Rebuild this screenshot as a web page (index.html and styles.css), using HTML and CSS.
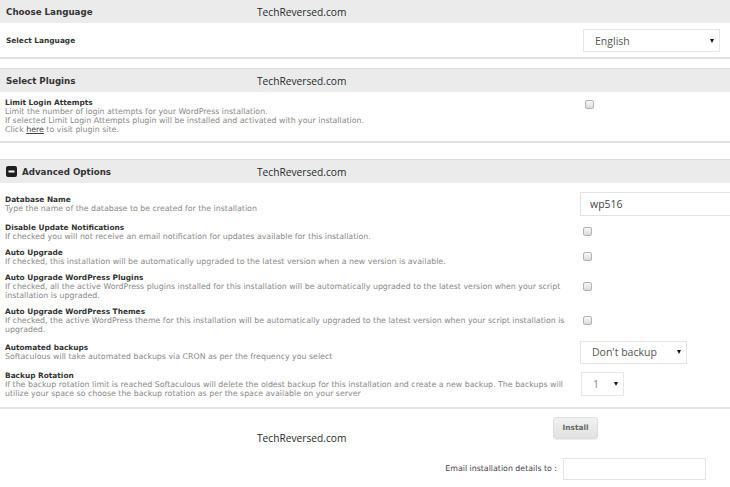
FILE: index.html
```html
<!DOCTYPE html>
<html>
<head>
<meta charset="utf-8">
<link rel="stylesheet" href="styles.css">
</head>
<body>
<div class="page">

  <section class="sec sec-lang">
    <div class="sec-head"><span class="sec-title">Choose Language</span><span class="wm">TechReversed.com</span></div>
    <div class="row row-lang">
      <div class="label-col"><div class="lbl">Select Language</div></div>
      <div class="ctrl-col"><span class="sel sel-lang"><select><option>English</option></select></span></div>
    </div>
  </section>

  <section class="sec sec-plugins">
    <div class="sec-head"><span class="sec-title">Select Plugins</span><span class="wm">TechReversed.com</span></div>
    <div class="row row-plugin">
      <div class="label-col">
        <div class="lbl">Limit Login Attempts</div>
        <div class="desc">Limit the number of login attempts for your WordPress installation.<br>If selected Limit Login Attempts plugin will be installed and activated with your installation.<br>Click <a class="lnk" href="#">here</a> to visit plugin site.</div>
      </div>
      <div class="ctrl-col"><input type="checkbox" class="cb cb-plugin"></div>
    </div>
  </section>

  <section class="sec sec-adv">
    <div class="sec-head"><svg class="minus" width="11" height="11" viewBox="0 0 11 11"><rect width="11" height="11" rx="2" fill="#1e1e1e"/><rect x="2.5" y="4.5" width="6" height="2" fill="#fff"/></svg><span class="sec-title">Advanced Options</span><span class="wm">TechReversed.com</span></div>
    <div class="adv-body">
      <div class="row">
        <div class="label-col">
          <div class="lbl">Database Name</div>
          <div class="desc">Type the name of the database to be created for the installation</div>
        </div>
        <div class="ctrl-col"><input type="text" class="txt txt-db" value="wp516"></div>
      </div>
      <div class="row">
        <div class="label-col">
          <div class="lbl">Disable Update Notifications</div>
          <div class="desc">If checked you will not receive an email notification for updates available for this installation.</div>
        </div>
        <div class="ctrl-col"><input type="checkbox" class="cb"></div>
      </div>
      <div class="row">
        <div class="label-col">
          <div class="lbl">Auto Upgrade</div>
          <div class="desc">If checked, this installation will be automatically upgraded to the latest version when a new version is available.</div>
        </div>
        <div class="ctrl-col"><input type="checkbox" class="cb"></div>
      </div>
      <div class="row">
        <div class="label-col">
          <div class="lbl">Auto Upgrade WordPress Plugins</div>
          <div class="desc">If checked, all the active WordPress plugins installed for this installation will be automatically upgraded to the latest version when your script installation is upgraded.</div>
        </div>
        <div class="ctrl-col"><input type="checkbox" class="cb"></div>
      </div>
      <div class="row">
        <div class="label-col">
          <div class="lbl">Auto Upgrade WordPress Themes</div>
          <div class="desc">If checked, the active WordPress theme for this installation will be automatically upgraded to the latest version when your script installation is upgraded.</div>
        </div>
        <div class="ctrl-col"><input type="checkbox" class="cb"></div>
      </div>
      <div class="row">
        <div class="label-col">
          <div class="lbl">Automated backups</div>
          <div class="desc">Softaculous will take automated backups via CRON as per the frequency you select</div>
        </div>
        <div class="ctrl-col"><span class="sel sel-backup"><select><option>Don't backup</option></select></span></div>
      </div>
      <div class="row">
        <div class="label-col">
          <div class="lbl">Backup Rotation</div>
          <div class="desc">If the backup rotation limit is reached Softaculous will delete the oldest backup for this installation and create a new backup. The backups will utilize your space so choose the backup rotation as per the space available on your server</div>
        </div>
        <div class="ctrl-col"><span class="sel sel-rot"><select><option>1</option></select></span></div>
      </div>
    </div>
  </section>

  <div class="footer">
    <span class="wm wm-foot">TechReversed.com</span>
    <div class="btn-row"><button class="btn">Install</button></div>
    <div class="email-row">
      <label class="email-lbl">Email installation details to :</label>
      <input type="text" class="txt txt-email">
    </div>
  </div>

</div>
</body>
</html>
```

FILE: styles.css
```css
html, body {
  margin: 0;
  padding: 0;
  background: #fff;
}

body {
  font-family: "DejaVu Sans", Verdana, sans-serif;
  color: #333;
}

.page {
  width: 730px;
}

.sec {
  border-bottom: 2px solid #e3e3e3;
}

.sec-plugins,
.sec-adv {
  border-top: 1px solid #dcdcdc;
}

.sec-lang {
  margin-bottom: 9px;
}

.sec-plugins {
  margin-bottom: 16px;
}

.sec-head {
  position: relative;
  height: 23px;
  background: #ebebec;
  display: flex;
  align-items: center;
  padding-left: 6px;
}

.sec-title {
  font-weight: bold;
  font-size: 8.7px;
  color: #333;
}

.minus {
  display: block;
  margin-right: 5px;
  flex: none;
}

.wm {
  position: absolute;
  left: 257px;
  top: 5px;
  font-family: "Open Sans", "Noto Sans", sans-serif;
  font-size: 10.2px;
  line-height: 14px;
  font-weight: normal;
  color: #2a2a2a;
  white-space: nowrap;
}

.row {
  display: flex;
  align-items: center;
  padding: 3.5px 0;
}

.label-col {
  flex: none;
  width: 570px;
  padding-left: 5px;
}

.ctrl-col {
  padding-left: 5px;
  display: flex;
  align-items: center;
}

.lbl {
  font-weight: bold;
  font-size: 7.4px;
  line-height: 9px;
  color: #333;
}

.desc {
  font-size: 7.85px;
  line-height: 9px;
  color: #8a8a8a;
}

.lnk {
  color: #444;
  text-decoration: underline;
}

.row-lang {
  padding: 6px 0 5px;
}

.row-lang .lbl {
  padding-left: 1px;
}

.row-plugin {
  align-items: flex-start;
  padding: 5.5px 0 7.5px;
}

.cb {
  -webkit-appearance: none;
  appearance: none;
  box-sizing: border-box;
  width: 9px;
  height: 9px;
  margin: 0 0 0 3px;
  border: 1px solid #b4b4b4;
  border-radius: 2px;
  background: linear-gradient(#f8f8f8, #dadada);
}

.cb-plugin {
  margin: 2px 0 0 5px;
}

.adv-body {
  padding: 5px 0 6px;
}

.txt {
  box-sizing: border-box;
  border: 1px solid #e4e4e4;
  background: #fff;
  font-family: "Open Sans", "Noto Sans", sans-serif;
  font-size: 10.5px;
  color: #444;
  outline: none;
  margin: 0;
}

.txt-db {
  width: 160px;
  height: 24px;
  padding: 0 0 0 9px;
}

.sel {
  position: relative;
  display: inline-block;
}

.sel select {
  -webkit-appearance: none;
  appearance: none;
  box-sizing: border-box;
  display: block;
  border: 1px solid #e6e6e6;
  background: #fff;
  font-family: "Open Sans", "Noto Sans", sans-serif;
  font-size: 10.5px;
  color: #555;
  padding: 0 0 0 11px;
  margin: 0;
  outline: none;
}

.sel::after {
  content: "";
  position: absolute;
  right: 6px;
  top: 50%;
  margin-top: -2px;
  border-left: 2.5px solid transparent;
  border-right: 2.5px solid transparent;
  border-top: 4px solid #111;
}

.sel-lang {
  margin-left: 3px;
}

.sel-lang select {
  width: 137px;
  height: 23px;
}

.sel-backup select {
  width: 107px;
  height: 23px;
}

.sel-rot {
  margin-left: 1px;
}

.sel-rot select {
  width: 43px;
  height: 24px;
  color: #888;
}

.footer {
  position: relative;
  padding-top: 6px;
  height: 72px;
}

.wm-foot {
  top: 22px;
}

.btn-row {
  padding-left: 553px;
}

.btn {
  box-sizing: border-box;
  width: 45px;
  height: 22px;
  border: 1px solid #dedede;
  border-radius: 3px;
  background: linear-gradient(#f1f1f1, #e1e1e1);
  box-shadow: 0 1px 1px rgba(0, 0, 0, 0.08);
  font-family: "DejaVu Sans", Verdana, sans-serif;
  font-weight: bold;
  font-size: 7.4px;
  color: #666;
  padding: 0;
  margin: 0;
}

.email-row {
  display: flex;
  align-items: center;
  margin-top: 19px;
}

.email-lbl {
  width: 560px;
  text-align: right;
  padding-right: 3px;
  box-sizing: border-box;
  font-size: 7.85px;
  color: #4d3d4d;
}

.txt-email {
  width: 143px;
  height: 22px;
  margin-left: 3px;
}
```
